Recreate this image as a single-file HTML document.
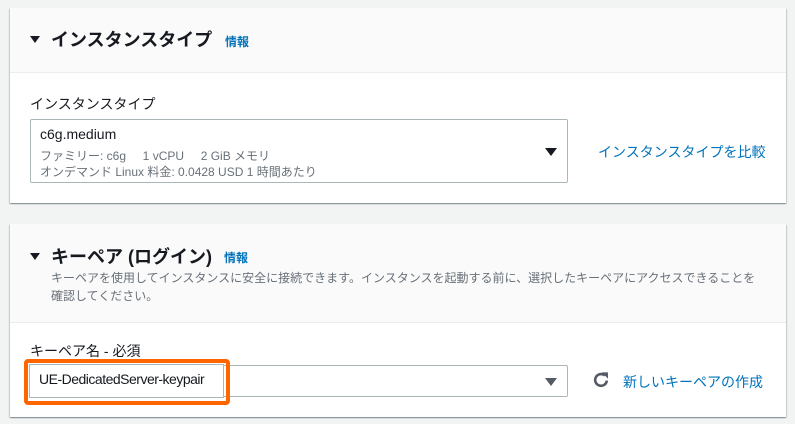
<!DOCTYPE html>
<html><head><meta charset="utf-8"><style>
body{margin:0;width:795px;height:424px;background:#f2f3f3;font-family:"Liberation Sans","Noto Sans CJK JP",sans-serif;position:relative;overflow:hidden;color:#16191f}
.p{position:absolute;left:10px;width:776px;background:#fff;box-shadow:0 1px 1px rgba(0,28,36,.3),1px 1px 1px rgba(0,28,36,.15),-1px 1px 1px rgba(0,28,36,.15)}
.h{position:absolute;left:0;right:0;top:0;background:#fafafa;border-bottom:1px solid #eaeded}
.a{position:absolute;white-space:nowrap}
.t{font-size:18px;font-weight:bold}
.i{font-size:12px;color:#0073bb;font-weight:bold}
.tri{width:0;height:0;border-left:5px solid transparent;border-right:5px solid transparent;border-top:7px solid #16191f}
.box{position:absolute;border:1px solid #aab7b8;border-radius:2px;background:#fff}
.g{font-size:12px;color:#687078}
.l{font-size:14px;color:#0073bb}
</style></head><body>
<div class="p" style="top:8px;height:195px">
 <div class="h" style="height:64px"></div>
 <div class="a tri" style="left:20px;top:28px"></div>
 <div class="a t" style="left:41px;top:18px">インスタンスタイプ</div>
 <div class="a i" style="left:215px;top:25px">情報</div>
 <div class="a" style="left:20px;top:86px;font-size:14px">インスタンスタイプ</div>
 <div class="box" style="left:20px;top:111px;width:536px;height:62px">
  <div class="a" style="left:9px;top:6px;font-size:14px">c6g.medium</div>
  <div class="a g" style="left:9px;top:27px">ファミリー: c6g&nbsp;&nbsp;&nbsp;&nbsp;&nbsp;1 vCPU&nbsp;&nbsp;&nbsp;&nbsp;&nbsp;2 GiB メモリ</div>
  <div class="a g" style="left:9px;top:43px">オンデマンド Linux 料金: 0.0428 USD 1 時間あたり</div>
  <div class="a tri" style="left:514px;top:28px;border-left-width:6px;border-right-width:6px;border-top-width:8px"></div>
 </div>
 <div class="a l" style="left:588px;top:134px">インスタンスタイプを比較</div>
</div>
<div class="p" style="top:224px;height:193px">
 <div class="h" style="height:98px"></div>
 <div class="a tri" style="left:20px;top:29px"></div>
 <div class="a t" style="left:41px;top:19px">キーペア (ログイン)</div>
 <div class="a i" style="left:214px;top:25px">情報</div>
 <div class="a g" style="left:41px;top:45px">キーペアを使用してインスタンスに安全に接続できます。インスタンスを起動する前に、選択したキーペアにアクセスできることを</div>
 <div class="a g" style="left:41px;top:63px">確認してください。</div>
 <div class="a" style="left:20px;top:117px;font-size:14px">キーペア名 - 必須</div>
 <div class="box" style="left:20px;top:141px;width:536px;height:30px">
  <div class="a tri" style="left:514px;top:12px;border-left-width:6px;border-right-width:6px;border-top-width:8px;border-top-color:#545b64"></div>
 </div>
 <div class="a" style="left:14px;top:135px;width:198px;height:38px;border:4px solid #ff6600;border-radius:4px"></div>
 <div class="a" style="left:19px;top:140px;width:193px;height:32px;border:1px solid #aab7b8;background:#fff"></div>
 <div class="a" style="left:29px;top:147px;font-size:14px;letter-spacing:-0.5px">UE-DedicatedServer-keypair</div>
 <svg class="a" style="left:582px;top:147px" width="18" height="18" viewBox="0 0 16 16"><path d="M13.2 8.5A5.2 5.2 0 1 1 11.4 4" fill="none" stroke="#545b64" stroke-width="2.3"/><path d="M8.6 1.2h5.6v5.6z" fill="#545b64"/></svg>
 <div class="a l" style="left:613px;top:148px">新しいキーペアの作成</div>
</div>
</body></html>
